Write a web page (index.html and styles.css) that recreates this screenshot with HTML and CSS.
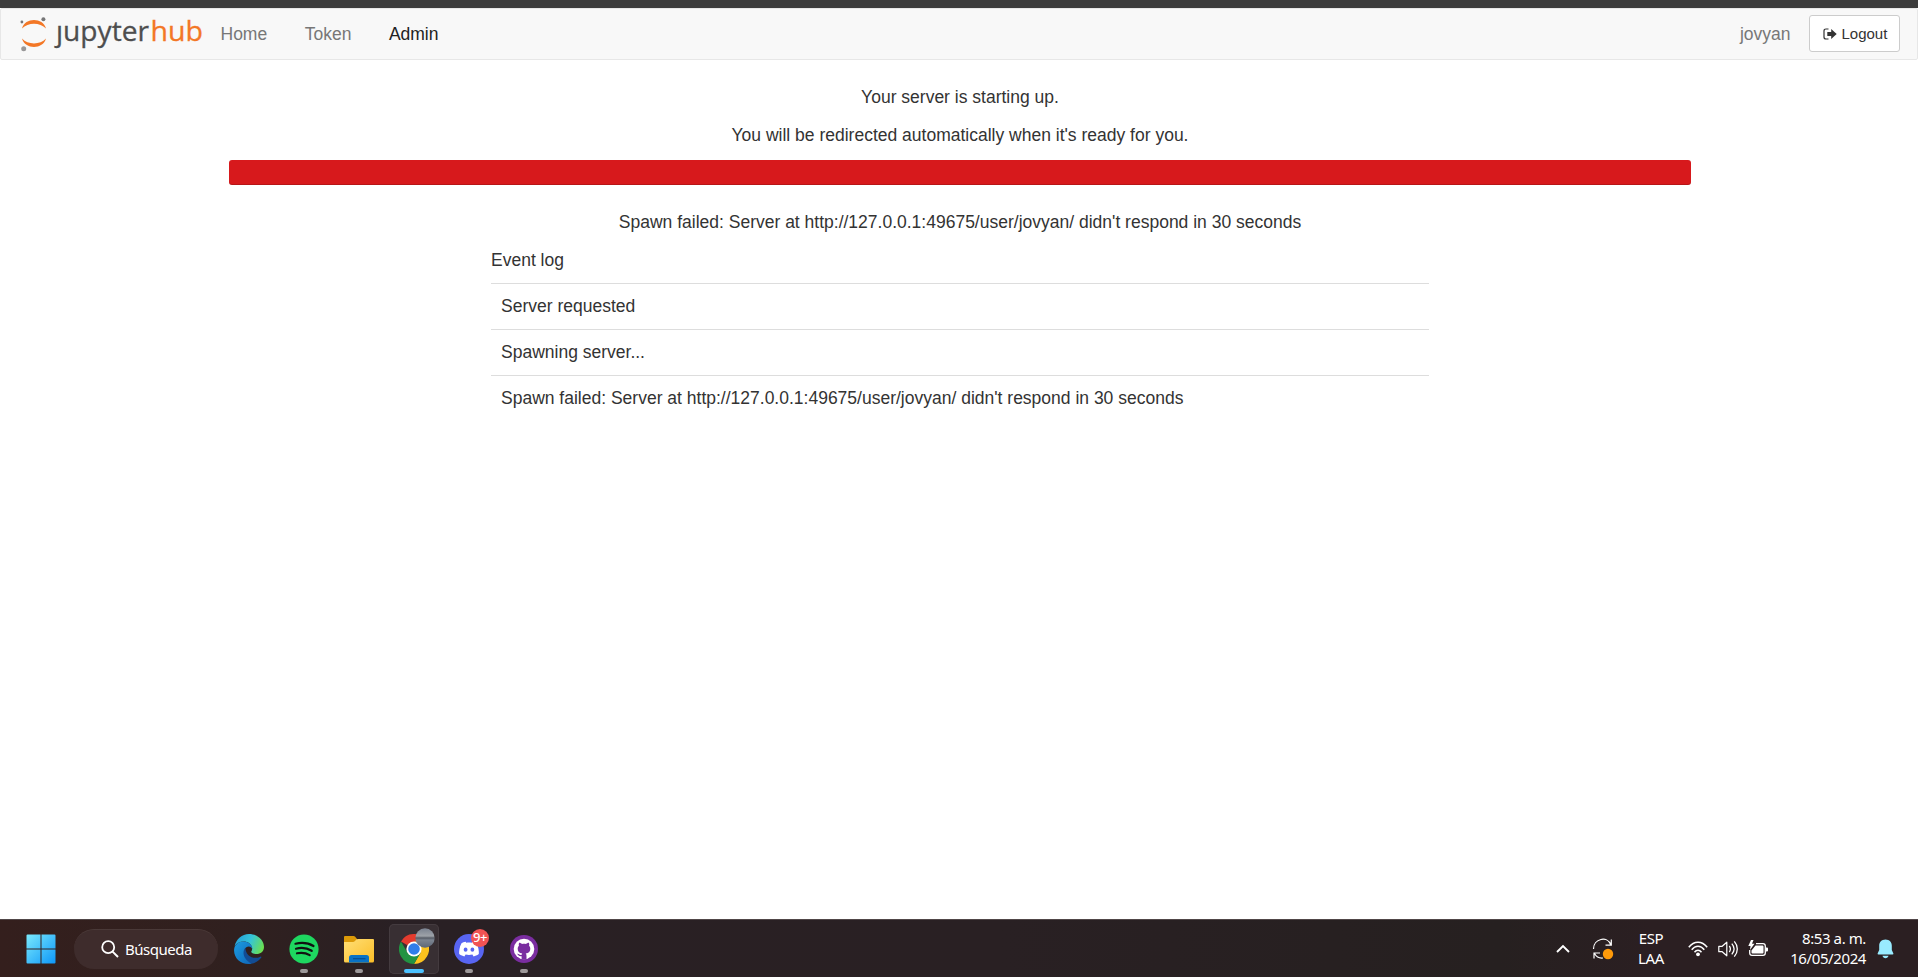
FILE: index.html
```html
<!DOCTYPE html>
<html lang="en">
<head>
<meta charset="utf-8">
<title>JupyterHub</title>
<link rel="stylesheet" href="styles.css">
</head>
<body>
<div class="window-edge"></div>
<nav class="navbar">
  <svg class="logo" width="184" height="40" viewBox="0 0 184 40">
    <path d="M2 14.500C5 3.200 23 3.200 26 14.500C20 8 8 8 2 14.500Z" fill="#f37726"/>
    <path d="M2 24.500C5 35.800 23 35.800 26 24.500C20 31 8 31 2 24.500Z" fill="#f37726"/>
    <circle cx="23.400" cy="5.200" r="2" fill="#767677"/>
    <circle cx="1.900" cy="8" r="1.400" fill="#767677"/>
    <circle cx="3.700" cy="34.800" r="2.500" fill="#989798"/>
    <text x="36" y="27" class="logo-text" fill="#4e4e4e" stroke="#4e4e4e" textLength="93" lengthAdjust="spacingAndGlyphs">ȷupyter</text>
    <text x="130.500" y="27" class="logo-text" fill="#f37726" stroke="#f37726" textLength="52.500" lengthAdjust="spacingAndGlyphs">hub</text>
  </svg>
  <div class="nav-links">
    <a class="nav-link">Home</a>
    <a class="nav-link">Token</a>
    <a class="nav-link nav-link-dark">Admin</a>
  </div>
  <span class="user">jovyan</span>
  <a class="logout">
    <svg width="14" height="12" viewBox="0 0 14 12"><path d="M5.500 1H3Q1 1 1 3V9Q1 11 3 11H5.500" fill="none" stroke="#333" stroke-width="1.200"/><path d="M4.300 3.900H8.200V1.100L13.700 6L8.200 10.900V8.100H4.300Z" fill="#333"/></svg>
    <span>Logout</span>
  </a>
</nav>
<main class="container">
  <p class="message">Your server is starting up.</p>
  <p class="message">You will be redirected automatically when it's ready for you.</p>
  <div class="progress"></div>
  <p class="message">Spawn failed: Server at http://127.0.0.1:49675/user/jovyan/ didn't respond in 30 seconds</p>
  <section class="events">
    <p class="events-title">Event log</p>
    <div class="event">Server requested</div>
    <div class="event">Spawning server...</div>
    <div class="event">Spawn failed: Server at http://127.0.0.1:49675/user/jovyan/ didn't respond in 30 seconds</div>
  </section>
</main>
<footer class="taskbar">
  <div class="task start">
    <svg width="30" height="30" viewBox="0 0 30 30">
      <defs><linearGradient id="win" x1="0" y1="0" x2="30" y2="30" gradientUnits="userSpaceOnUse"><stop offset="0" stop-color="#7cebfd"/><stop offset="1" stop-color="#0b95f8"/></linearGradient></defs>
      <path d="M1.500.500H14.500V14.500H.500V1.500Q.500.500 1.500.500ZM15.500.500H28.500Q29.500.500 29.500 1.500V14.500H15.500ZM.500 15.500H14.500V29.500H1.500Q.500 29.500.500 28.500ZM15.500 15.500H29.500V28.500Q29.500 29.500 28.500 29.500H15.500Z" fill="url(#win)"/>
    </svg>
  </div>
  <div class="search">
    <svg width="18" height="18" viewBox="0 0 18 18"><circle cx="7.200" cy="7.200" r="6" fill="none" stroke="#fff" stroke-width="1.800"/><path d="M11.600 11.600L17 17" stroke="#fff" stroke-width="2"/></svg>
    <span class="search-label">Búsqueda</span>
  </div>
  <div class="task">
    <svg width="30" height="30" viewBox="0 0 30 30">
      <defs>
        <linearGradient id="edgeTop" x1="0" y1=".3" x2="1" y2=".6"><stop offset="0" stop-color="#249fd8"/><stop offset=".5" stop-color="#35c4d8"/><stop offset="1" stop-color="#6be04f"/></linearGradient>
        <linearGradient id="edgeLow" x1="0" y1="0" x2="1" y2="1"><stop offset="0" stop-color="#1b9de2"/><stop offset="1" stop-color="#0f65b8"/></linearGradient>
      </defs>
      <path d="M.600 12.500C2 5 8 0 15 0C23.500 0 30 6 30 13C30 17.500 26.500 20 22.500 20C19 20 16.800 18.800 17.300 17.500C18.800 15.500 18.500 12 15.500 9.500C11 6 3.500 7.500.600 12.500Z" fill="url(#edgeTop)"/>
      <path d="M11.500 14C6.500 17.500 8 27 17 29.800C21.500 29 25 27 27.300 23.500C27.700 22.700 27 22.300 26.400 22.700C19.500 26 11.500 22 11.500 14Z" fill="#124c94"/>
      <path d="M.100 15.500C.500 9 8 5.500 14 8.500C17 10 18.600 12.500 18.200 15C17.500 12.500 14.500 11.800 12 13.500C7.500 17 9 25.500 17.500 29.700C8 31.500-.500 24.500.100 15.500Z" fill="url(#edgeLow)"/>
    </svg>
  </div>
  <div class="task">
    <svg width="30" height="30" viewBox="0 0 30 30"><circle cx="15" cy="15" r="14.600" fill="#1ed760"/><path d="M6.500 9.700C12.500 8.200 19.500 9 24.500 12M7 14.700C12 13.400 18.500 14.200 22.700 16.800M8 19.300C12.500 18.300 17 18.900 20.700 21.100" fill="none" stroke="#111" stroke-width="2.200" stroke-linecap="round"/></svg>
    <i class="running"></i>
  </div>
  <div class="task">
    <svg width="30" height="30" viewBox="0 0 30 30">
      <defs><linearGradient id="folder" x1="0" y1="0" x2="1" y2="1"><stop offset="0" stop-color="#ffdf76"/><stop offset="1" stop-color="#fbbd27"/></linearGradient></defs>
      <path d="M0 3Q0 2 1 2H9.500Q10.500 2 11.200 2.800L13 5V9H0Z" fill="#dc9a08"/>
      <path d="M0 8H9Q10 8 11 7L12.300 5.500Q13 5 14 5H29Q30 5 30 6V27Q30 28.500 28.500 28.500H1.500Q0 28.500 0 27Z" fill="url(#folder)"/>
      <path d="M5 28.500V23.500Q5 21 7.500 21H22.500Q25 21 25 23.500V28.500Z" fill="#0872c6"/><path d="M9 24.700H21.500" stroke="#064b91" stroke-width="1.200"/>
    </svg>
    <i class="running"></i>
  </div>
  <div class="task task-active">
    <svg width="30" height="30" viewBox="0 0 30 30">
      <path d="M15 15L2 7.500A15 15 0 0 1 28 7.500H15Z" fill="#e33b2e"/>
      <path d="M15 7.500H28A15 15 0 0 1 15 30L21.500 18.700Z" fill="#fcc31e"/>
      <path d="M2 7.500A15 15 0 0 0 15 30L21.500 18.700L8.500 18.700Z" fill="#229342"/>
      <circle cx="15" cy="15" r="7.600" fill="#fff"/><circle cx="15" cy="15" r="5.800" fill="#2f7de9"/>
    </svg>
    <svg class="avatar" width="20" height="20" viewBox="0 0 20 20"><defs><clipPath id="face"><circle cx="10" cy="10" r="9.700"/></clipPath><linearGradient id="lake" x1="0" y1="0" x2="0" y2="1"><stop offset="0" stop-color="#78808e"/><stop offset=".4" stop-color="#9da2a8"/><stop offset=".5" stop-color="#565c66"/><stop offset=".6" stop-color="#7c8490"/><stop offset="1" stop-color="#5c6676"/></linearGradient></defs><path d="M0 0H20V20H0Z" fill="url(#lake)" clip-path="url(#face)"/></svg>
    <i class="running running-active"></i>
  </div>
  <div class="task">
    <svg width="30" height="30" viewBox="0 0 30 30"><circle cx="15" cy="15" r="15" fill="#5865f2"/><path d="M12.200 8.700L11.700 7.800C9.900 8.100 8.500 8.600 7.500 9.200C5.500 13 4.900 17 5.200 20C7 21.400 8.800 22.100 10.400 22.400L11.600 20.500C13.800 21.100 16.200 21.100 18.400 20.500L19.600 22.400C21.200 22.100 23 21.400 24.800 20C25.100 17 24.500 13 22.500 9.200C21.500 8.600 20.100 8.100 18.300 7.800L17.800 8.700C16 8.500 14 8.500 12.200 8.700Z" fill="#fff"/><ellipse cx="11.600" cy="15.700" rx="1.900" ry="2.100" fill="#5865f2"/><ellipse cx="18.400" cy="15.700" rx="1.900" ry="2.100" fill="#5865f2"/></svg>
    <span class="count">9+</span>
    <i class="running"></i>
  </div>
  <div class="task">
    <svg width="30" height="30" viewBox="0 0 30 30"><circle cx="15" cy="15" r="14" fill="#7a2da0"/><circle cx="15" cy="15" r="10.300" fill="#fff"/><path d="M12.600 25.500V22.200C9.500 22.800 9.200 20.500 8 19.800C10 19.500 10.300 21.500 12.500 20.900C12.700 20.200 13 19.900 13.300 19.600C10 19.200 8.700 17.500 8.700 14.800C8.700 13.400 9.100 12.500 9.900 11.700C9.600 10.700 9.700 9.700 10.100 8.800C11.400 8.800 12.300 9.500 13 10C14.300 9.700 15.700 9.700 17 10C17.700 9.500 18.600 8.800 19.900 8.800C20.300 9.700 20.400 10.700 20.100 11.700C20.900 12.500 21.300 13.400 21.300 14.800C21.300 17.500 20 19.200 16.700 19.600C17.200 20 17.500 20.700 17.500 21.700V25.500Z" fill="#7a2da0"/></svg>
    <i class="running"></i>
  </div>
  <div class="tray">
    <div class="tray-cell"><svg width="16" height="10" viewBox="0 0 16 10"><path d="M2 8L8 2L14 8" fill="none" stroke="#fff" stroke-width="1.900"/></svg></div>
    <div class="tray-cell"><svg width="22" height="24" viewBox="0 0 22 24"><path d="M1.500 12C1.500 1.500 15.500-1.500 18.700 7.700M19.300 2.500V8.200H13.500M2 21.500V16H8M2.500 16.500C4.500 20 7.500 21.500 11 21" fill="none" stroke="#fff" stroke-width="1.200"/><circle cx="16" cy="17" r="5.200" fill="#ff9a0a"/></svg></div>
    <div class="language"><span>ESP</span><span>LAA</span></div>
    <div class="status">
      <svg width="20" height="16" viewBox="0 0 20 16"><path d="M.800 6.300C6-.500 14-.500 19.200 6.300M3.700 8.800C7.300 4.100 12.700 4.100 16.300 8.800M6.500 11.300C8.500 8.600 11.500 8.600 13.500 11.300" fill="none" stroke="#fff" stroke-width="1.500"/><circle cx="10" cy="13.300" r="1.900" fill="#fff"/></svg>
      <svg width="20" height="18" viewBox="0 0 20 18"><path d="M.800 6.300H4.200L8.800 2.200V15.800L4.200 11.700H.800Z" fill="none" stroke="#fff" stroke-width="1.200" stroke-linejoin="round"/><path d="M11.300 6C12.700 7.900 12.700 10.100 11.300 12M13.800 3.600C16.700 7 16.700 11 13.800 14.400M16.300 1.400C20.300 6 20.300 12 16.300 16.600" fill="none" stroke="#fff" stroke-width="1.300"/></svg>
      <svg width="20" height="18" viewBox="0 0 20 18"><path d="M8 3.700H15Q17.300 3.700 17.300 6V13Q17.300 15.300 15 15.300H4Q1.700 15.300 1.700 13V10" fill="none" stroke="#fff" stroke-width="1.300"/><path d="M7.500 5.500H14.500Q15.500 5.500 15.500 6.500V12.500Q15.500 13.500 14.500 13.500H4.500Q3.500 13.500 3.500 12.500V10.500ZM18 7.500H19Q20 7.500 20 8.500V10.500Q20 11.500 19 11.500H18ZM3 0L.300 6H2.500L2 10L6.500 3.700H4L5.500 0Z" fill="#fff"/></svg>
    </div>
    <div class="clock"><span class="time">8:53 a. m.</span><span class="date">16/05/2024</span></div>
    <svg class="bell" width="17" height="20" viewBox="0 0 17 20"><path d="M8.500.500C4.500.500 2.200 3.300 2.200 6.800V11L.600 14.500Q.400 15.500 1.500 15.500H15.500Q16.600 15.500 16.400 14.500L14.800 11V6.800C14.800 3.300 12.500.500 8.500.500ZM5.500 16.800H11.500C11 20 6 20 5.500 16.800Z" fill="#99ebff"/></svg>
  </div>
</footer>
</body>
</html>
```

FILE: styles.css
```css
* { box-sizing: border-box; }

body {
  margin: 0;
  height: 977px;
  display: flex;
  flex-direction: column;
  overflow: hidden;
  background: #fff;
  color: #333;
  font: 17.5px/25px "Liberation Sans", Arial, sans-serif;
}

svg { display: block; flex: none; }

.window-edge { height: 8px; background: #3c3c3c; flex: none; }

.navbar {
  height: 52px;
  flex: none;
  display: flex;
  align-items: center;
  padding: 0 17px 0 19px;
  background: #f8f8f8;
  border: 1px solid #e7e7e7;
  border-radius: 2px;
}

.logo { overflow: visible; }
.logo-text { font: 28px "Open Sans", "Noto Sans", sans-serif; stroke-width: .3px; }

.nav-links { display: flex; gap: 37.5px; margin-left: 16.5px; flex: 1; }
.nav-link, .user { color: #777; }
.nav-link-dark { color: #222; }

.logout {
  display: flex;
  align-items: center;
  gap: 5px;
  width: 91px;
  height: 37px;
  margin: 0 0 1px 18.5px;
  padding-left: 12.5px;
  background: #fff;
  border: 1px solid #ccc;
  border-radius: 3px;
  font-size: 15px;
}

.container {
  width: 1462px;
  margin: 0 227px 0 229px;
  padding-top: 25px;
  flex: 1;
}

.message { margin: 0 0 12.5px; text-align: center; }

.progress {
  height: 25px;
  margin-bottom: 25px;
  border-radius: 3px;
  background: #d7191c;
  box-shadow: inset 0 -1px 0 rgba(0, 0, 0, .15);
}

.events { width: 938px; margin: 0 auto; }
.events-title { margin: 0 0 10.5px; }
.event { height: 46px; padding: 10px; border-top: 1px solid #ddd; }

.taskbar {
  height: 58px;
  flex: none;
  display: flex;
  align-items: center;
  gap: 5px;
  padding: 0 24px 0 15px;
  border-top: 1px solid #504648;
  background: linear-gradient(90deg, #341f1d 0, #30201f 240px, #292024 400px, #292023 1000px, #262020 1500px, #2b1f22 1650px, #2b1f22 100%);
  color: #fff;
  font-family: "Noto Sans", "Open Sans", sans-serif;
}

.task {
  position: relative;
  width: 50px;
  height: 50px;
  flex: none;
  display: flex;
  align-items: center;
  justify-content: center;
}

.start { margin-right: 4px; padding-left: 1px; }

.task-active {
  border-radius: 5px;
  background: #382f33;
  box-shadow: inset 0 0 0 1px #443b3f;
}

.running {
  position: absolute;
  bottom: 1px;
  left: 21px;
  width: 8px;
  height: 4px;
  border-radius: 2px;
  background: #9d989a;
}

.running-active { left: 15px; width: 20px; background: #4cc2ff; }
.avatar { position: absolute; left: 26px; top: 4px; }

.count {
  position: absolute;
  left: 27px;
  top: 5px;
  width: 18px;
  height: 18px;
  border-radius: 9px;
  background: #f15354;
  font-size: 13px;
  font-weight: 500;
  letter-spacing: -.5px;
  line-height: 17px;
  text-align: center;
}

.search {
  display: flex;
  align-items: center;
  gap: 6px;
  width: 144px;
  height: 40px;
  margin-right: 1px;
  padding-left: 27px;
  border-radius: 20px;
  background: #3e2c2c;
  border-top: 1px solid #4a3938;
}

.search-label { font-size: 15px; letter-spacing: -.5px; }

.tray { display: flex; align-items: center; margin-left: auto; font-size: 15px; line-height: 20px; }
.tray-cell { width: 40px; display: flex; justify-content: center; }

.language { width: 56px; display: flex; flex-direction: column; align-items: center; letter-spacing: -.4px; margin-top: -1px; }
.status { width: 98px; display: flex; align-items: center; gap: 10px; padding-left: 9px; }
.clock { width: 89px; display: flex; flex-direction: column; align-items: flex-end; letter-spacing: -.4px; white-space: nowrap; margin-top: -1px; }
.bell { margin-left: 11px; }
```
